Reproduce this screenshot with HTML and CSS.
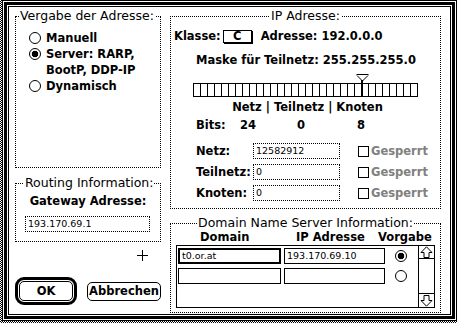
FILE: index.html
```html
<!DOCTYPE html>
<html lang="de">
<head>
<meta charset="utf-8">
<title>MacTCP</title>
<link rel="stylesheet" href="styles.css">
</head>
<body>
<div class="screen">
  <div class="dialog">
    <div class="col-left">
      <fieldset class="group g-addr">
        <legend>Vergabe der Adresse:</legend>
        <div class="addr-body">
          <div class="radio-row"><span class="radio"></span>Manuell</div>
          <div class="radio-row"><span class="radio on"></span>Server: RARP,</div>
          <div class="radio-row cont">BootP, DDP-IP</div>
          <div class="radio-row"><span class="radio"></span>Dynamisch</div>
        </div>
      </fieldset>
      <fieldset class="group g-route">
        <legend>Routing Information:</legend>
        <div class="gw-label">Gateway Adresse:</div>
        <div class="field dotted gw-field">193.170.69.1</div>
      </fieldset>
      <svg class="crosshair" width="11" height="11" viewBox="0 0 11 11"><path d="M5.5 0V11M0 5.5H11" stroke="#000" stroke-width="1" fill="none"/></svg>
      <div class="buttons">
        <div class="btn-ring"><div class="btn ok">OK</div></div>
        <div class="btn cancel">Abbrechen</div>
      </div>
    </div>
    <div class="col-right">
      <fieldset class="group g-ip">
        <legend class="center">IP Adresse:</legend>
        <div class="klasse-row">
          <span>Klasse:</span>
          <span class="popup">C</span>
          <span class="adresse">Adresse: 192.0.0.0</span>
        </div>
        <div class="maske">Maske für Teilnetz: 255.255.255.0</div>
        <div class="slider">
          <svg class="thumb" width="13" height="23" viewBox="0 0 13 23"><path d="M0.5 0.5H12.5M1 1.5L6.5 7M12 1.5L6.5 7" stroke="#000" stroke-width="1" fill="none"/><rect x="5" y="6" width="2" height="17" fill="#000"/></svg>
        </div>
        <div class="nt-head">Netz | Teilnetz | Knoten</div>
        <div class="bits"><span>Bits:</span><span>24</span><span>0</span><span>8</span></div>
        <div class="f-rows">
          <div class="f-row"><span>Netz:</span><span class="field dotted">12582912</span><span class="check"></span><span class="gray">Gesperrt</span></div>
          <div class="f-row"><span>Teilnetz:</span><span class="field dotted">0</span><span class="check"></span><span class="gray">Gesperrt</span></div>
          <div class="f-row"><span>Knoten:</span><span class="field dotted">0</span><span class="check"></span><span class="gray">Gesperrt</span></div>
        </div>
      </fieldset>
      <fieldset class="group g-dns">
        <legend class="center">Domain Name Server Information:</legend>
        <div class="dns-head"><span>Domain</span><span>IP Adresse</span><span>Vorgabe</span></div>
        <div class="dns-table">
          <div class="dns-rows">
            <div class="dns-row"><span class="field solid dom sel">t0.or.at</span><span class="field solid ip">193.170.69.10</span><span class="radio on"></span></div>
            <div class="dns-row"><span class="field solid dom"></span><span class="field solid ip"></span><span class="radio"></span></div>
          </div>
          <div class="scrollbar">
            <div class="arrow up"><svg width="13" height="12" viewBox="0 0 13 12"><path d="M6.5 0.8L12 6.5H9V11.5H4V6.5H1Z" stroke="#000" stroke-width="1" fill="none"/></svg></div>
            <div class="track"></div>
            <div class="arrow down"><svg width="13" height="12" viewBox="0 0 13 12"><path d="M6.5 11.2L12 5.5H9V0.5H4V5.5H1Z" stroke="#000" stroke-width="1" fill="none"/></svg></div>
          </div>
        </div>
      </fieldset>
    </div>
  </div>
</div>
</body>
</html>
```
FILE: styles.css
```css
* { box-sizing: border-box; }
html, body { margin: 0; padding: 0; background: #fff; }
body {
  font-family: "DejaVu Sans", "Liberation Sans", sans-serif;
  font-size: 11.5px;
  font-weight: bold;
  color: #000;
  line-height: 14px;
}
.screen {
  width: 457px;
  height: 323px;
  padding: 0 0 2px 2px;
  background: repeating-conic-gradient(#000 0 25%, #fff 0 50%) 0 0 / 2px 2px;
}
.dialog {
  width: 455px;
  height: 321px;
  background: #fff;
  box-shadow: inset 0 0 0 1px #000, inset 0 0 0 2px #fff, inset 0 0 0 5px #000, inset 0 0 0 6px #fff, inset 0 0 0 7px #000;
  display: grid;
  grid-template-columns: 146px 271px;
  column-gap: 9px;
  padding: 10px 0 0 13px;
  align-items: start;
}
.group {
  margin: 0;
  padding: 0;
  border: 1px dotted #000;
  min-width: 0;
}
.group legend {
  font-weight: normal;
  font-size: 12.5px;
  line-height: 12px;
  padding: 0 1px;
}
.group legend.center { margin: 0 auto; }

.col-left { position: relative; display: flex; flex-direction: column; }
.g-addr { height: 158px; }
.g-addr legend { margin-left: 3px; }
.addr-body { padding: 8px 0 0 13px; }
.radio-row { height: 16px; line-height: 15px; display: flex; align-items: center; }
.radio-row.cont { padding-left: 17px; }
.radio {
  width: 12px; height: 12px; flex: none;
  border: 1px solid #000; border-radius: 50%;
  margin-right: 5px; background: #fff;
}
.radio.on { background: radial-gradient(circle at center, #000 0 3px, #fff 3.6px); }

.g-route { margin-top: 9px; height: 65px; }
.g-route legend { margin-left: 8px; }
.gw-label { margin-top: 5px; text-align: center; }
.gw-field { margin: 8px 0 0 9px; width: 125px; }

.field {
  display: block;
  height: 16px;
  font-weight: normal;
  font-size: 9.5px;
  line-height: 14px;
  padding: 0 2px;
  white-space: nowrap;
  overflow: hidden;
}
.field.dotted { border: 1px dotted #000; }
.field.solid { border: 1px solid #000; }

.crosshair { position: absolute; left: 122px; top: 240px; }

.buttons { margin-top: 35px; display: flex; align-items: center; gap: 10px; }
.btn-ring {
  width: 62px; height: 28px;
  border: 3px solid #000; border-radius: 9px;
  padding: 1px;
}
.btn {
  border: 1px solid #000; border-radius: 5px;
  display: flex; align-items: center; justify-content: center;
}
.btn.ok { width: 100%; height: 100%; }
.btn.cancel { width: 74px; height: 19px; }

.col-right { display: flex; flex-direction: column; }
.g-ip { height: 199px; }
.klasse-row { margin: 7px 0 0 3px; height: 14px; display: flex; align-items: center; }
.popup {
  width: 29px; height: 13px; margin-left: 2px;
  border: 1px solid #000; box-shadow: 1px 1px 0 #000;
  display: flex; align-items: center; justify-content: center;
}
.adresse { margin-left: 9px; }
.maske { margin: 10px 0 0 25px; }
.slider {
  position: relative;
  margin: 16px 0 0 22px;
  width: 225px; height: 14px;
  border-top: 1px solid #000; border-bottom: 1px solid #000;
  background: linear-gradient(to right, #000 0 1px, transparent 1px) 0 0 / 7px 100% repeat-x;
}
.thumb { position: absolute; left: 163px; top: -10px; }
.nt-head { margin: 3px 0 0 4px; text-align: center; }
.bits { margin: 4px 0 0 25px; display: grid; grid-template-columns: 44px 57px 60px auto; }
.f-rows { margin: 11px 0 0 25px; display: flex; flex-direction: column; gap: 5px; }
.f-row {
  display: grid;
  grid-template-columns: 57px 87px 18px 11px auto;
  align-items: center;
  height: 16px;
}
.f-row .field { grid-column: 2; }
.check { grid-column: 4; width: 11px; height: 11px; border: 1px solid #000; }
.f-row .gray { grid-column: 5; margin-left: 2px; color: #808080; }

.g-dns { margin-top: 8px; height: 96px; }
.dns-head { margin: 1px 0 0 29px; display: grid; grid-template-columns: 96px 82px auto; }
.dns-table {
  margin: 1px 0 0 5px;
  width: 259px; height: 63px;
  border: 1px solid #000;
  display: flex;
}
.dns-rows { flex: 1; padding: 2px 0 0 1px; display: flex; flex-direction: column; gap: 4px; }
.dns-row { display: flex; align-items: center; height: 16px; }
.dns-row .dom { width: 103px; }
.dns-row .ip { width: 101px; margin-left: 3px; }
.dns-row .radio { margin: 0 0 0 10px; }
.field.sel { border-width: 2px; line-height: 12px; }
.scrollbar { width: 16px; border-left: 1px solid #000; display: flex; flex-direction: column; }
.arrow { display: flex; align-items: center; justify-content: center; }
.arrow.up { height: 13px; border-bottom: 1px solid #000; }
.arrow.down { height: 14px; border-top: 1px solid #000; }
.track { flex: 1; }
```
